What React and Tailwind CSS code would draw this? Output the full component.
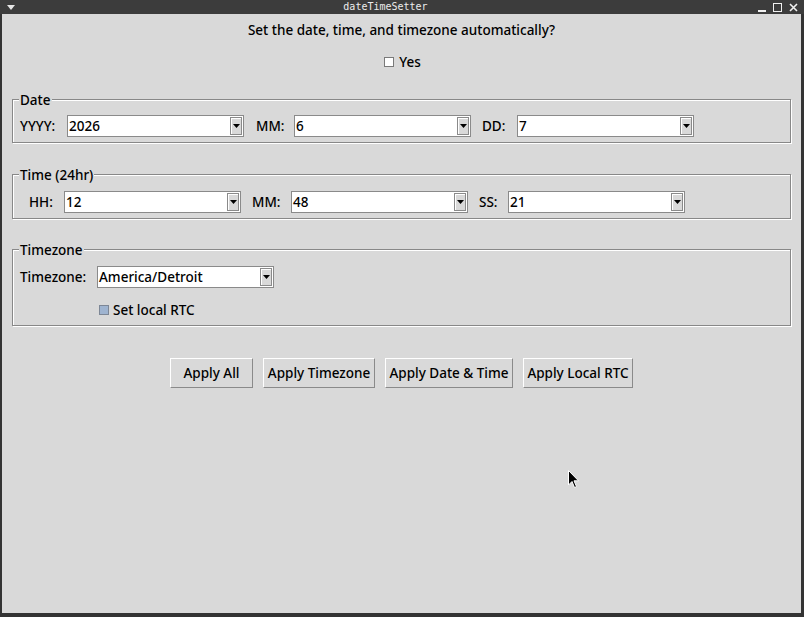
import React from 'react';

const FONT = { fontFamily: '"Noto Sans", "Open Sans", sans-serif' };

// Tk-style combobox: white entry with a raised arrow button
const Combo = ({ value }) => (
  <div className="flex h-[22px] w-[177px] shrink-0 border border-[#8a8a8a] bg-white">
    <span className="flex-1 pl-[1px] text-[13.5px] font-medium leading-[20px] text-black">{value}</span>
    <div className="my-[1px] mr-[1px] flex w-[12px] items-center justify-center border border-[#8a8a8a] bg-[#d9d9d9] shadow-[inset_1px_1px_0_#fff]">
      <svg width="7" height="4" viewBox="0 0 7 4">
        <path d="M0 0 L7 0 L3.5 4 Z" fill="#000" />
      </svg>
    </div>
  </div>
);

// groove-bordered labelframe
const Frame = ({ label, className, children }) => (
  <div
    className={
      'relative ml-[10px] w-[779px] border border-[#888] shadow-[1px_1px_0_#fff,inset_1px_1px_0_#fff] ' +
      className
    }
  >
    <span className="absolute -top-[9px] left-[6px] bg-[#d9d9d9] px-[1px] text-[13.5px] font-medium leading-[18px] text-black">
      {label}
    </span>
    {children}
  </div>
);

const Label = ({ children, className }) => (
  <span className={'shrink-0 text-[13.5px] font-medium leading-[22px] text-black ' + className}>{children}</span>
);

const Button = ({ children, w }) => (
  <button
    className={
      'h-[30px] border border-t-white border-l-white border-r-[#8a8a8a] border-b-[#8a8a8a] bg-[#d9d9d9] text-[13.5px] font-medium text-black ' +
      w
    }
  >
    {children}
  </button>
);

export default function App() {
  return (
    <div className="relative flex h-[617px] w-[804px] flex-col bg-[#333]" style={FONT}>
      {/* title bar */}
      <div className="flex h-[14px] items-center bg-[#3c3c3c] pl-[7px] pr-[6px]">
        <svg width="8" height="5" viewBox="0 0 8 5">
          <path d="M0 0 L8 0 L4 5 Z" fill="#e6e6e6" />
        </svg>
        <div
          className="flex-1 pr-[2px] text-center text-[10px] leading-[14px] text-[#ececec]"
          style={{ fontFamily: '"DejaVu Sans Mono", monospace' }}
        >
          dateTimeSetter
        </div>
        <div className="flex items-center gap-[7px] text-[#f0f0f0]">
          <div className="mt-[7px] h-[2px] w-[8px] bg-[#f0f0f0]" />
          <div className="h-[9px] w-[9px] border border-[#f0f0f0]" />
          <svg width="9" height="9" viewBox="0 0 9 9">
            <path d="M1 1 L8 8 M8 1 L1 8" stroke="#f0f0f0" strokeWidth="1.6" />
          </svg>
        </div>
      </div>

      {/* window body */}
      <div className="mb-[4px] ml-[2px] mr-[3px] flex flex-1 flex-col bg-[#d9d9d9]">
        <div className="mt-[7px] text-center text-[13.5px] font-medium leading-[18px] text-black">
          Set the date, time, and timezone automatically?
        </div>
        <div className="mt-[14px] flex h-[18px] items-center justify-center gap-[5px] pl-[2px]">
          <div className="h-[10px] w-[10px] border border-[#7a7a7a] bg-white" />
          <span className="text-[13.5px] font-medium leading-[18px] text-black">Yes</span>
        </div>

        <Frame label="Date" className="mt-[28px] pb-[5px] pt-[15px]">
          <div className="flex">
            <Label className="w-[54px] pl-[7px]">YYYY:</Label>
            <Combo value="2026" />
            <Label className="w-[50px] pl-[12px]">MM:</Label>
            <Combo value="6" />
            <Label className="w-[46px] pl-[11px]">DD:</Label>
            <Combo value="7" />
          </div>
        </Frame>

        <Frame label="Time (24hr)" className="mt-[31px] pb-[5px] pt-[16px]">
          <div className="flex">
            <Label className="w-[51px] pl-[16px]">HH:</Label>
            <Combo value="12" />
            <Label className="w-[50px] pl-[11px]">MM:</Label>
            <Combo value="48" />
            <Label className="w-[40px] pl-[11px]">SS:</Label>
            <Combo value="21" />
          </div>
        </Frame>

        <Frame label="Timezone" className="mt-[30px] pb-[6px] pt-[16px]">
          <div className="flex">
            <Label className="w-[84px] pl-[7px]">Timezone:</Label>
            <Combo value="America/Detroit" />
          </div>
          <div className="ml-[86px] mt-[13px] flex h-[18px] items-center gap-[4px]">
            <div className="h-[10px] w-[10px] border border-[#7d8796] bg-[#9fb4d0]" />
            <span className="text-[13.5px] font-medium leading-[18px] text-black">Set local RTC</span>
          </div>
        </Frame>

        <div className="mt-[32px] flex justify-center gap-[10px]">
          <Button w="w-[83px]">Apply All</Button>
          <Button w="w-[112px]">Apply Timezone</Button>
          <Button w="w-[128px]">Apply Date &amp; Time</Button>
          <Button w="w-[110px]">Apply Local RTC</Button>
        </div>
      </div>

      {/* mouse pointer */}
      <svg className="absolute left-[568px] top-[470px]" width="12" height="19" viewBox="0 0 12 19">
        <path d="M0.5 0.5 L0.5 15 L4 11.5 L6.5 17.5 L8.5 16.6 L6 10.8 L10.5 10.8 Z" fill="#000" stroke="#fff" strokeWidth="1" />
      </svg>
    </div>
  );
}
